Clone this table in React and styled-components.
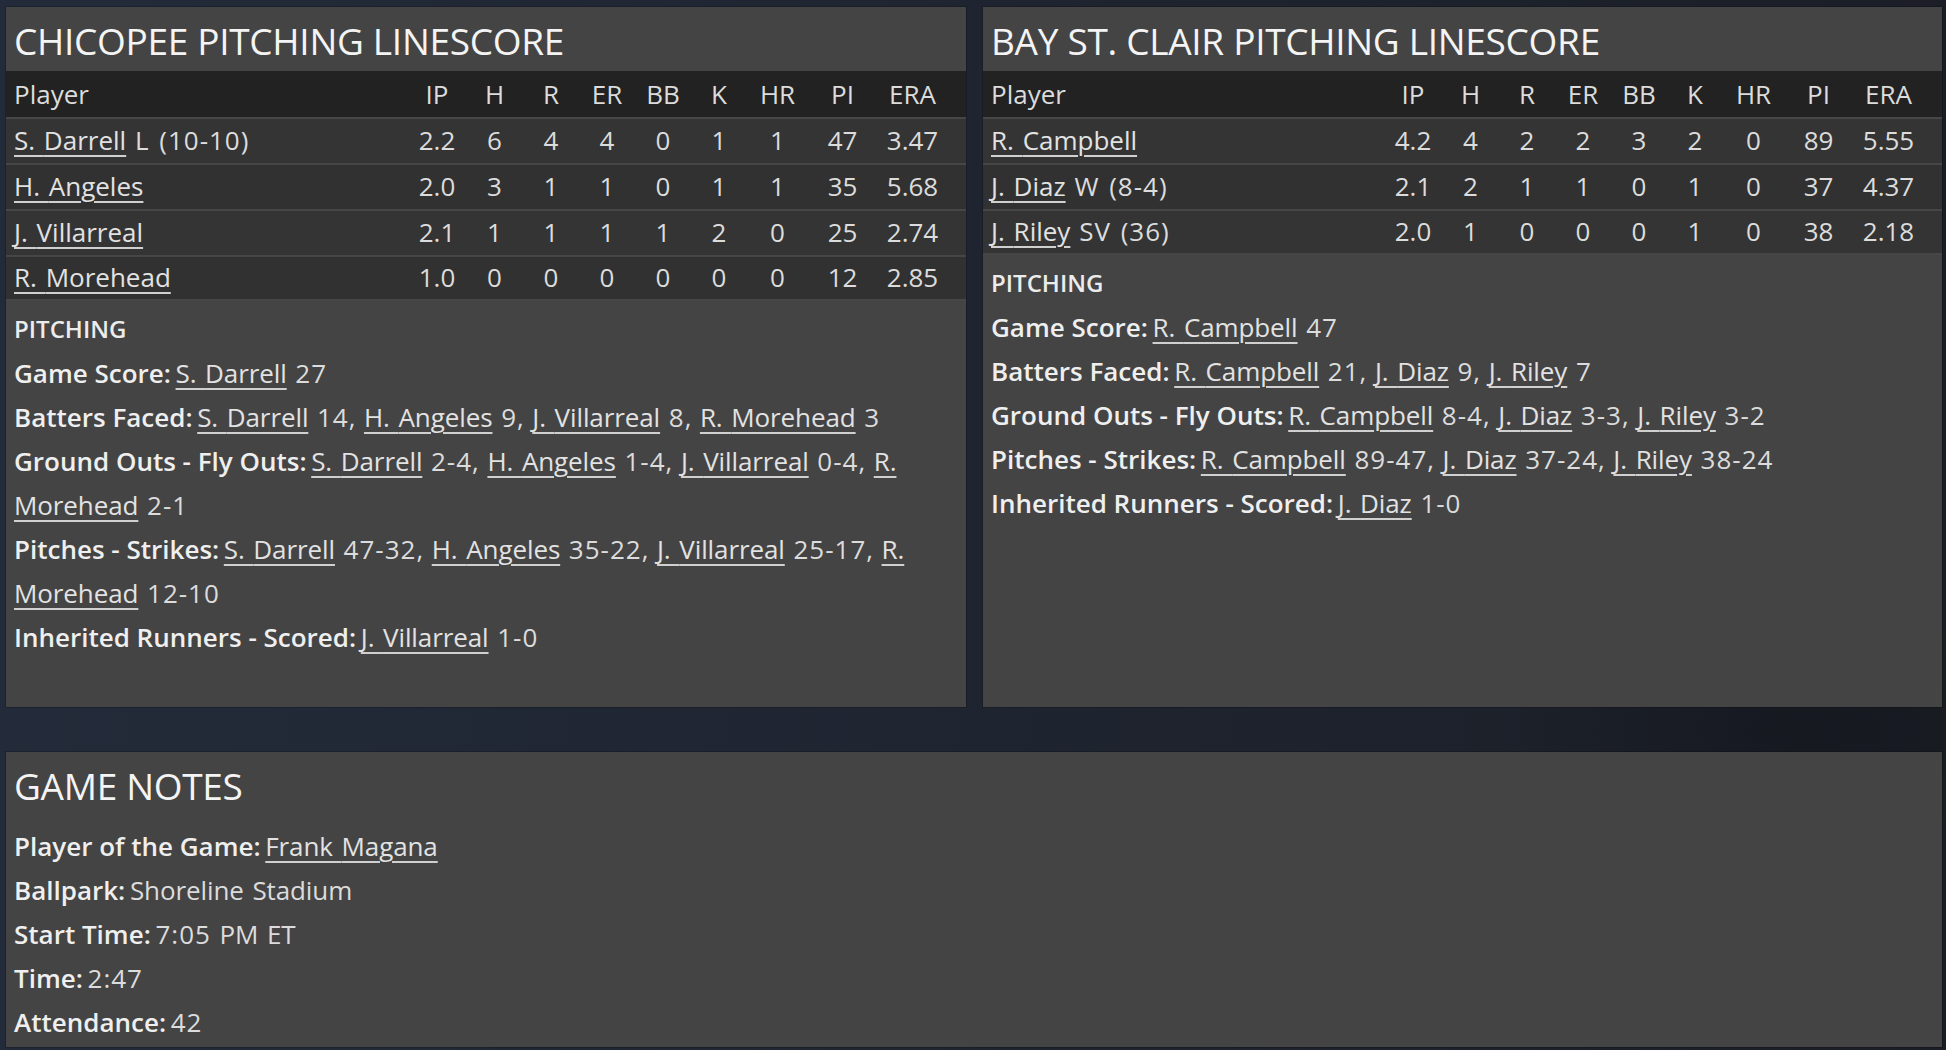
import React from "react";
import styled, { createGlobalStyle } from "styled-components";

const GlobalStyle = createGlobalStyle`
  html, body { margin: 0; padding: 0; }
  body {
    background: #1f2531;
    font-family: "Open Sans", "Noto Sans", sans-serif;
    color: #dedede;
  }
  * { box-sizing: border-box; }
`;

const Page = styled.div`
  width: 1946px;
  height: 1050px;
  overflow: hidden;
  padding: 7px 4px 3px 6px;
  display: flex;
  flex-direction: column;
  gap: 45px;
  background:
    radial-gradient(ellipse 420px 160px at 1800px 730px, rgba(10, 12, 16, 0.35), transparent 70%),
    linear-gradient(90deg, #232b3a 0%, #1f2531 45%, #1b1e26 100%);
`;

const TopRow = styled.div`
  display: grid;
  grid-template-columns: 960px 959px;
  gap: 17px;
`;

const Panel = styled.section`
  background: #444444;
  display: flex;
  flex-direction: column;
  box-shadow: 0 0 0 1px rgba(0, 0, 0, 0.18);
  ${(p) => p.$grow && "flex: 1;"}
`;

const TitleBar = styled.div`
  height: 64px;
  display: flex;
  align-items: center;
  padding: 3px 8px 0;
  font-size: 37px;
  font-weight: 500;
  color: #f4f4f4;
  letter-spacing: -0.3px;
  white-space: nowrap;
`;

const cols = "1fr 58px 57px 56px 56px 56px 56px 61px 69px 71px";

const HeadRow = styled.div`
  display: grid;
  grid-template-columns: ${cols};
  height: 46px;
  align-items: center;
  padding: 0 18px 1px 8px;
  background: #222222;
  font-size: 26px;
  color: #dcdcdc;
`;

const DataRow = styled.div`
  display: grid;
  grid-template-columns: ${cols};
  height: 46px;
  align-items: center;
  padding: 0 18px 2px 8px;
  background: ${(p) => (p.$alt ? "#313131" : "#343434")};
  border-top: 2px solid #464646;
  font-size: 26px;
  color: #dcdcdc;
  word-spacing: 2px;
  &:last-child {
    border-bottom: 2px solid #464646;
  }
`;

const PlayerCell = styled.div`
  white-space: nowrap;
`;

const StatCell = styled.div`
  text-align: center;
  white-space: nowrap;
  word-spacing: 0;
`;

const Link = styled.a`
  color: #e2e2e2;
  text-decoration: underline;
  text-decoration-thickness: 2px;
  text-underline-offset: 5px;
  text-decoration-color: #d0d0d0;
  cursor: pointer;
`;

const Num = styled.span`
  letter-spacing: 1px;
`;

const Section = styled.div`
  padding: ${(p) => p.$pad || "6px 8px 48px"};
  font-size: 26px;
  line-height: 44px;
  color: #dcdcdc;
  word-spacing: 2px;
`;

const SectionLabel = styled.div`
  font-weight: 600;
  font-size: 24px;
  color: #ececec;
`;

const Line = styled.div`
  letter-spacing: -0.1px;
`;

const Label = styled.span`
  font-weight: 600;
  color: #efefef;
  letter-spacing: 0;
  word-spacing: 0;
  margin-right: -4px;
`;

const statKeys = ["IP", "H", "R", "ER", "BB", "K", "HR", "PI", "ERA"];

const chicopee = [
  { name: "S. Darrell", note: "L (10-10)", s: ["2.2", "6", "4", "4", "0", "1", "1", "47", "3.47"] },
  { name: "H. Angeles", note: "", s: ["2.0", "3", "1", "1", "0", "1", "1", "35", "5.68"] },
  { name: "J. Villarreal", note: "", s: ["2.1", "1", "1", "1", "1", "2", "0", "25", "2.74"] },
  { name: "R. Morehead", note: "", s: ["1.0", "0", "0", "0", "0", "0", "0", "12", "2.85"] },
];

const bayStClair = [
  { name: "R. Campbell", note: "", s: ["4.2", "4", "2", "2", "3", "2", "0", "89", "5.55"] },
  { name: "J. Diaz", note: "W (8-4)", s: ["2.1", "2", "1", "1", "0", "1", "0", "37", "4.37"] },
  { name: "J. Riley", note: "SV (36)", s: ["2.0", "1", "0", "0", "0", "1", "0", "38", "2.18"] },
];

const chicopeeNotes = [
  { label: "Game Score:", items: [["S. Darrell", "27"]] },
  { label: "Batters Faced:", items: [["S. Darrell", "14"], ["H. Angeles", "9"], ["J. Villarreal", "8"], ["R. Morehead", "3"]] },
  { label: "Ground Outs - Fly Outs:", items: [["S. Darrell", "2-4"], ["H. Angeles", "1-4"], ["J. Villarreal", "0-4"], ["R. Morehead", "2-1"]] },
  { label: "Pitches - Strikes:", items: [["S. Darrell", "47-32"], ["H. Angeles", "35-22"], ["J. Villarreal", "25-17"], ["R. Morehead", "12-10"]] },
  { label: "Inherited Runners - Scored:", items: [["J. Villarreal", "1-0"]] },
];

const bayNotes = [
  { label: "Game Score:", items: [["R. Campbell", "47"]] },
  { label: "Batters Faced:", items: [["R. Campbell", "21"], ["J. Diaz", "9"], ["J. Riley", "7"]] },
  { label: "Ground Outs - Fly Outs:", items: [["R. Campbell", "8-4"], ["J. Diaz", "3-3"], ["J. Riley", "3-2"]] },
  { label: "Pitches - Strikes:", items: [["R. Campbell", "89-47"], ["J. Diaz", "37-24"], ["J. Riley", "38-24"]] },
  { label: "Inherited Runners - Scored:", items: [["J. Diaz", "1-0"]] },
];

/* A player name link; each word is its own anchor so a wrapped name keeps tidy boxes. */
function PlayerLink({ name }) {
  const words = name.split(" ");
  return (
    <>
      {words.map((w, i) => (
        <Link key={i}>{i < words.length - 1 ? `${w} ` : w}</Link>
      ))}
    </>
  );
}

function NoteLine({ label, items }) {
  return (
    <Line>
      <Label>{label}</Label>{" "}
      {items.map(([n, v], i) => (
        <React.Fragment key={i}>
          <PlayerLink name={n} /> <Num>{v}</Num>
          {i < items.length - 1 ? ", " : ""}
        </React.Fragment>
      ))}
    </Line>
  );
}

function LinescorePanel({ title, rows, notes }) {
  return (
    <Panel>
      <TitleBar>{title}</TitleBar>
      <HeadRow>
        <PlayerCell>Player</PlayerCell>
        {statKeys.map((k) => (
          <StatCell key={k}>{k}</StatCell>
        ))}
      </HeadRow>
      <div>
        {rows.map((r, i) => (
          <DataRow key={r.name} $alt={i % 2 === 1}>
            <PlayerCell>
              <PlayerLink name={r.name} />
              {r.note ? " " : ""}
              {r.note ? <Num>{r.note}</Num> : null}
            </PlayerCell>
            {r.s.map((v, j) => (
              <StatCell key={j}>{v}</StatCell>
            ))}
          </DataRow>
        ))}
      </div>
      <Section>
        <SectionLabel>PITCHING</SectionLabel>
        {notes.map((n) => (
          <NoteLine key={n.label} {...n} />
        ))}
      </Section>
    </Panel>
  );
}

export default function App() {
  return (
    <>
      <GlobalStyle />
      <Page>
        <TopRow>
          <LinescorePanel title="CHICOPEE PITCHING LINESCORE" rows={chicopee} notes={chicopeeNotes} />
          <LinescorePanel title="BAY ST. CLAIR PITCHING LINESCORE" rows={bayStClair} notes={bayNotes} />
        </TopRow>
        <Panel $grow>
          <TitleBar>GAME NOTES</TitleBar>
          <Section $pad="8px 8px 3px">
            <Line>
              <Label>Player of the Game:</Label> <PlayerLink name="Frank Magana" />
            </Line>
            <Line>
              <Label>Ballpark:</Label> Shoreline Stadium
            </Line>
            <Line>
              <Label>Start Time:</Label> <Num>7:05</Num> PM ET
            </Line>
            <Line>
              <Label>Time:</Label> <Num>2:47</Num>
            </Line>
            <Line>
              <Label>Attendance:</Label> <Num>42</Num>
            </Line>
          </Section>
        </Panel>
      </Page>
    </>
  );
}
